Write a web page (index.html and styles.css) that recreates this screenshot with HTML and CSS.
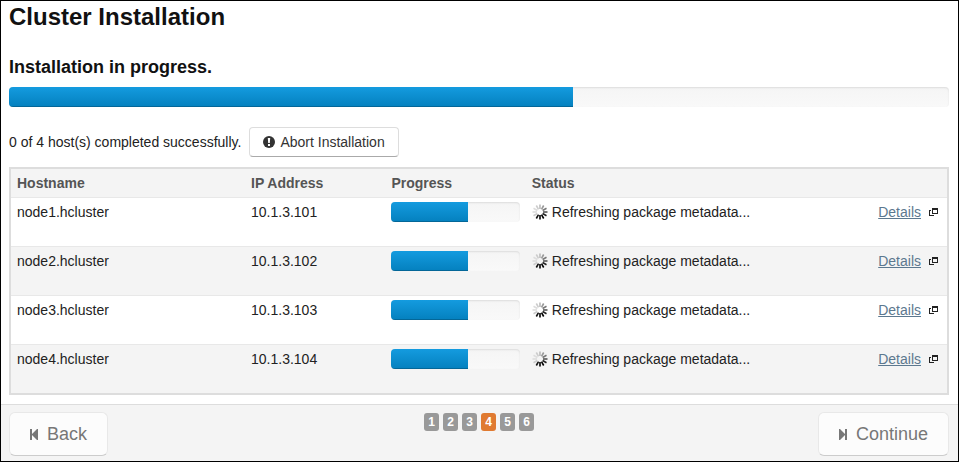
FILE: index.html
```
<!DOCTYPE html>
<html lang="en">
<head>
<meta charset="utf-8">
<title>Cluster Installation</title>
<link rel="stylesheet" href="styles.css">
</head>
<body>
<svg class="sprites" aria-hidden="true">
  <symbol id="spinner" viewBox="0 0 16 16">
    <g stroke-width="1.6">
      <path d="M8 11v4.500" stroke="#000"/>
      <path d="M6.500 10.600l-2.200 3.900" stroke="#111"/>
      <path d="M5.400 9.500l-3.900 2.200" stroke="#ccc"/>
      <path d="M5 8H.5" stroke="#ddd"/>
      <path d="M5.400 6.500L1.500 4.300" stroke="#ddd"/>
      <path d="M6.500 5.400L4.300 1.500" stroke="#ccc"/>
      <path d="M8 5V.5" stroke="#bbb"/>
      <path d="M9.500 5.400l2.200-3.900" stroke="#999"/>
      <path d="M10.600 6.500l3.900-2.200" stroke="#777"/>
      <path d="M11 8h4.500" stroke="#555"/>
      <path d="M10.600 9.500l3.900 2.200" stroke="#222"/>
      <path d="M9.500 10.600l2.200 3.900" stroke="#000"/>
    </g>
  </symbol>
  <symbol id="popup" viewBox="0 0 9 8">
    <path d="M3 0h6v6H3zM4 2v3h4V2z" fill="#222" fill-rule="evenodd"/>
    <path d="M0 2h2v1H1v4h4v1H0z" fill="#222"/>
  </symbol>
</svg>
<div class="wizard">
  <main class="content">
    <h1>Cluster Installation</h1>
    <h2>Installation in progress.</h2>
    <div class="progress" role="progressbar" aria-valuenow="60"><div class="bar" style="width:60%"></div></div>
    <div class="summary">
      <span>0 of 4 host(s) completed successfully.</span>
      <button class="btn" type="button"><svg width="12" height="12" viewBox="0 0 12 12"><circle cx="6" cy="6" r="6" fill="#333"/><path d="M4.800 2h2.400L6.800 7H5.200zM5 8h2v2H5z" fill="#fff"/></svg>Abort Installation</button>
    </div>
    <table class="hosts">
      <thead>
        <tr><th class="host">Hostname</th><th class="ip">IP Address</th><th class="prog">Progress</th><th>Status</th><th class="more"></th></tr>
      </thead>
      <tbody>
        <tr><td>node1.hcluster</td><td>10.1.3.101</td><td><div class="progress"><div class="bar" style="width:60%"></div></div></td><td><div class="status"><svg width="16" height="16"><use href="#spinner"/></svg>Refreshing package metadata...</div></td><td><div class="links"><a href="#">Details</a><svg width="9" height="8"><use href="#popup"/></svg></div></td></tr>
        <tr><td>node2.hcluster</td><td>10.1.3.102</td><td><div class="progress"><div class="bar" style="width:60%"></div></div></td><td><div class="status"><svg width="16" height="16"><use href="#spinner"/></svg>Refreshing package metadata...</div></td><td><div class="links"><a href="#">Details</a><svg width="9" height="8"><use href="#popup"/></svg></div></td></tr>
        <tr><td>node3.hcluster</td><td>10.1.3.103</td><td><div class="progress"><div class="bar" style="width:60%"></div></div></td><td><div class="status"><svg width="16" height="16"><use href="#spinner"/></svg>Refreshing package metadata...</div></td><td><div class="links"><a href="#">Details</a><svg width="9" height="8"><use href="#popup"/></svg></div></td></tr>
        <tr><td>node4.hcluster</td><td>10.1.3.104</td><td><div class="progress"><div class="bar" style="width:60%"></div></div></td><td><div class="status"><svg width="16" height="16"><use href="#spinner"/></svg>Refreshing package metadata...</div></td><td><div class="links"><a href="#">Details</a><svg width="9" height="8"><use href="#popup"/></svg></div></td></tr>
      </tbody>
    </table>
  </main>
  <footer class="footer">
    <div class="side"><button class="btn large" type="button" disabled><svg width="8" height="11" viewBox="0 0 8 11"><path d="M0 0h2v5l5-5h1v11H7L2 6v5H0z" fill="#777"/></svg>Back</button></div>
    <div class="steps"><span>1</span><span>2</span><span>3</span><span class="current">4</span><span>5</span><span>6</span></div>
    <div class="side end"><button class="btn large" type="button" disabled><svg width="8" height="11" viewBox="0 0 8 11"><path d="M8 0H6v5L1 0H0v11h1l5-5v5h2z" fill="#777"/></svg>Continue</button></div>
  </footer>
</div>
</body>
</html>
```
FILE: styles.css
```
* { box-sizing: border-box; }
body {
  margin: 0;
  font: 14px/20px "Liberation Sans", Arial, sans-serif;
  color: #222;
  background: #fff;
}
.sprites { position: absolute; width: 0; height: 0; }
svg { fill: none; flex: none; }
.wizard {
  display: flex;
  flex-direction: column;
  min-height: 100vh;
  border: 1px solid #000;
}
.content { padding: 0 9px 9px 8px; }
h1, h2 { margin: 0; color: #111; }
h1 { font-size: 24px; line-height: 32px; }
h2 { font-size: 18px; line-height: 24px; margin: 22px 0 8px; }
.progress {
  display: flex;
  height: 20px;
  overflow: hidden;
  border-radius: 4px;
  background: linear-gradient(#f5f5f5, #f9f9f9);
  box-shadow: inset 0 1px 2px rgba(0, 0, 0, .1);
}
.bar {
  background: linear-gradient(#149bdf, #0480be);
  box-shadow: inset 0 -1px 0 rgba(0, 0, 0, .2);
}
.summary {
  display: flex;
  align-items: center;
  gap: 8px;
  margin: 20px 0 10px;
}
.btn {
  display: flex;
  align-items: center;
  gap: 5px;
  padding: 4px 13px;
  font: inherit;
  color: #333;
  background: #fff;
  border: 1px solid #ddd;
  border-bottom-color: #aaa;
  border-radius: 4px;
}
.hosts {
  width: 100%;
  table-layout: fixed;
  border: 2px solid #ddd;
  border-spacing: 0;
}
th, td { padding: 4px 6px; text-align: left; vertical-align: top; }
th { height: 28px; color: #555; background: #f4f4f4; }
td { height: 49px; border-top: 1px solid #e8e8e8; }
tbody tr:nth-child(even) { background: #f4f4f4; }
.host { width: 25%; }
.ip, .prog { width: 15%; }
.more { width: 10%; }
.status { display: flex; align-items: center; gap: 4px; white-space: nowrap; }
.links { display: flex; align-items: center; justify-content: flex-end; gap: 8px; padding-right: 3px; }
a { color: #5c788f; text-decoration: underline; }
.footer {
  display: flex;
  flex: 1;
  align-items: flex-start;
  padding: 7px 9px 5px 8px;
  background: #f4f4f4;
  border-top: 1px solid #ddd;
}
.side { display: flex; flex: 1; }
.end { justify-content: flex-end; }
.large {
  gap: 9px;
  padding: 11px 20px;
  font-size: 18px;
  color: #777;
  background: #fcfcfc;
  border-color: #e8e8e8;
  border-bottom-color: #ccc;
  border-radius: 6px;
}
.steps { display: flex; gap: 4px; padding-top: 1px; }
.steps span {
  width: 15px;
  height: 18px;
  border-radius: 3px;
  background: #999;
  color: #fff;
  font-size: 12px;
  font-weight: bold;
  line-height: 18px;
  text-align: center;
}
.steps .current { background: #e07a31; }
```
